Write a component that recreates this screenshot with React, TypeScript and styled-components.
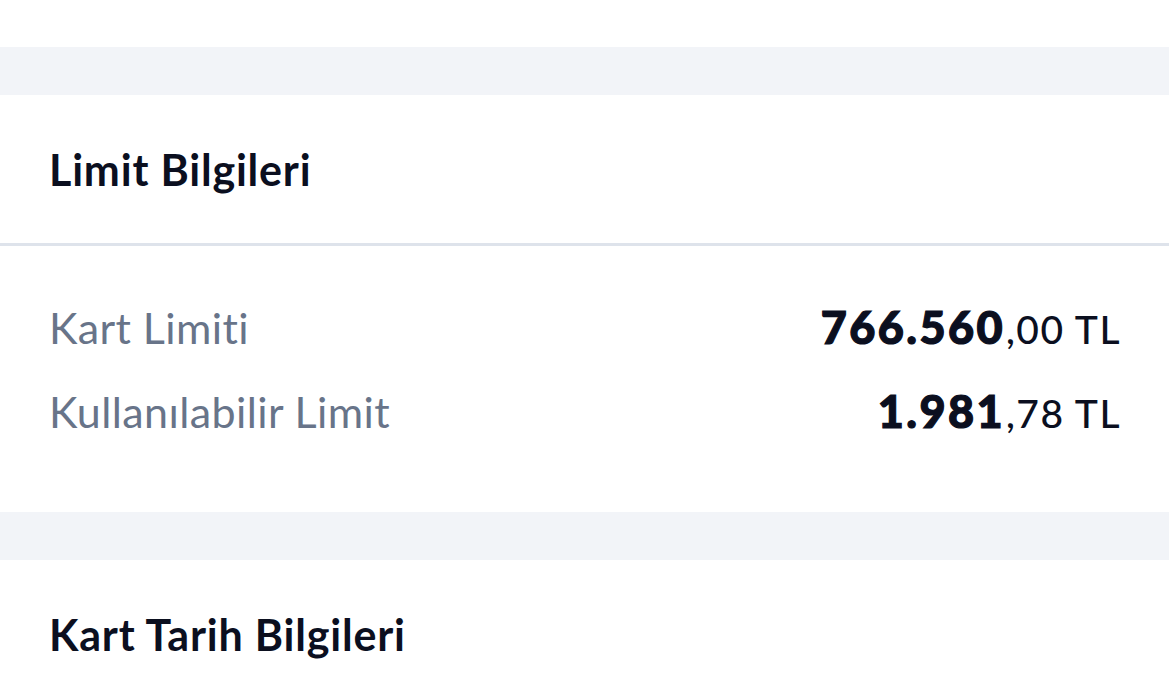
import React from 'react';
import styled, { createGlobalStyle } from 'styled-components';

const GlobalStyle = createGlobalStyle`
    html, body {
        margin: 0;
        padding: 0;
        background: #ffffff;
        font-family: Lato, "Noto Sans", sans-serif;
        -webkit-font-smoothing: antialiased;
    }
`

const Page = styled.div`
    display: flex;
    flex-direction: column;
    width: 100%;
    height: 673px;
    overflow: hidden;
    background: #ffffff;

    & > * {
        flex-shrink: 0;
    }
`

const TopSpace = styled.div`
    height: 47px;
    background: #ffffff;
`

const Gap = styled.div`
    height: 48px;
    background: #f2f4f8;
`

const Section = styled.section`
    display: flex;
    flex-direction: column;
    background: #ffffff;
`

const SectionHeader = styled.div<{ $divider?: boolean }>`
    display: flex;
    align-items: center;
    height: 148px;
    padding: 0 49px;
    border-bottom: ${(p) => (p.$divider ? '3px solid #dee3eb' : 'none')};
`

const SectionTitle = styled.h2`
    margin: 0;
    font-size: 43px;
    font-weight: 700;
    color: #0b0f1f;
    letter-spacing: 0.8px;
`

const Rows = styled.div`
    display: flex;
    flex-direction: column;
    padding: 39px 48px 59px 49px;
`

const Row = styled.div`
    display: flex;
    align-items: center;
    justify-content: space-between;
    height: 84px;
`

const Label = styled.span`
    font-size: 43px;
    font-weight: 400;
    color: #687489;
    letter-spacing: 0.4px;
`

const Amount = styled.span`
    display: flex;
    align-items: baseline;
    color: #0b0f1f;
`

const Whole = styled.span`
    font-size: 45px;
    font-weight: 900;
    letter-spacing: 2.4px;
    -webkit-text-stroke: 1.2px #0b0f1f;
`

const Fraction = styled.span`
    font-size: 39px;
    font-weight: 500;
    letter-spacing: 1.5px;
    margin-left: 1px;
`

const limits = [
    { label: 'Kart Limiti', whole: '766.560', fraction: '00' },
    { label: 'Kullanılabilir Limit', whole: '1.981', fraction: '78' },
];

const App: React.FC = () => {
    return (
        <Page>
            <GlobalStyle />
            <TopSpace />
            <Gap />
            <Section>
                <SectionHeader $divider>
                    <SectionTitle>Limit Bilgileri</SectionTitle>
                </SectionHeader>
                <Rows>
                    {limits.map((item) => (
                        <Row key={item.label}>
                            <Label>{item.label}</Label>
                            <Amount>
                                <Whole>{item.whole}</Whole>
                                <Fraction>,{item.fraction} TL</Fraction>
                            </Amount>
                        </Row>
                    ))}
                </Rows>
            </Section>
            <Gap />
            <Section>
                <SectionHeader>
                    <SectionTitle>Kart Tarih Bilgileri</SectionTitle>
                </SectionHeader>
            </Section>
        </Page>
    );
};

export default App;
